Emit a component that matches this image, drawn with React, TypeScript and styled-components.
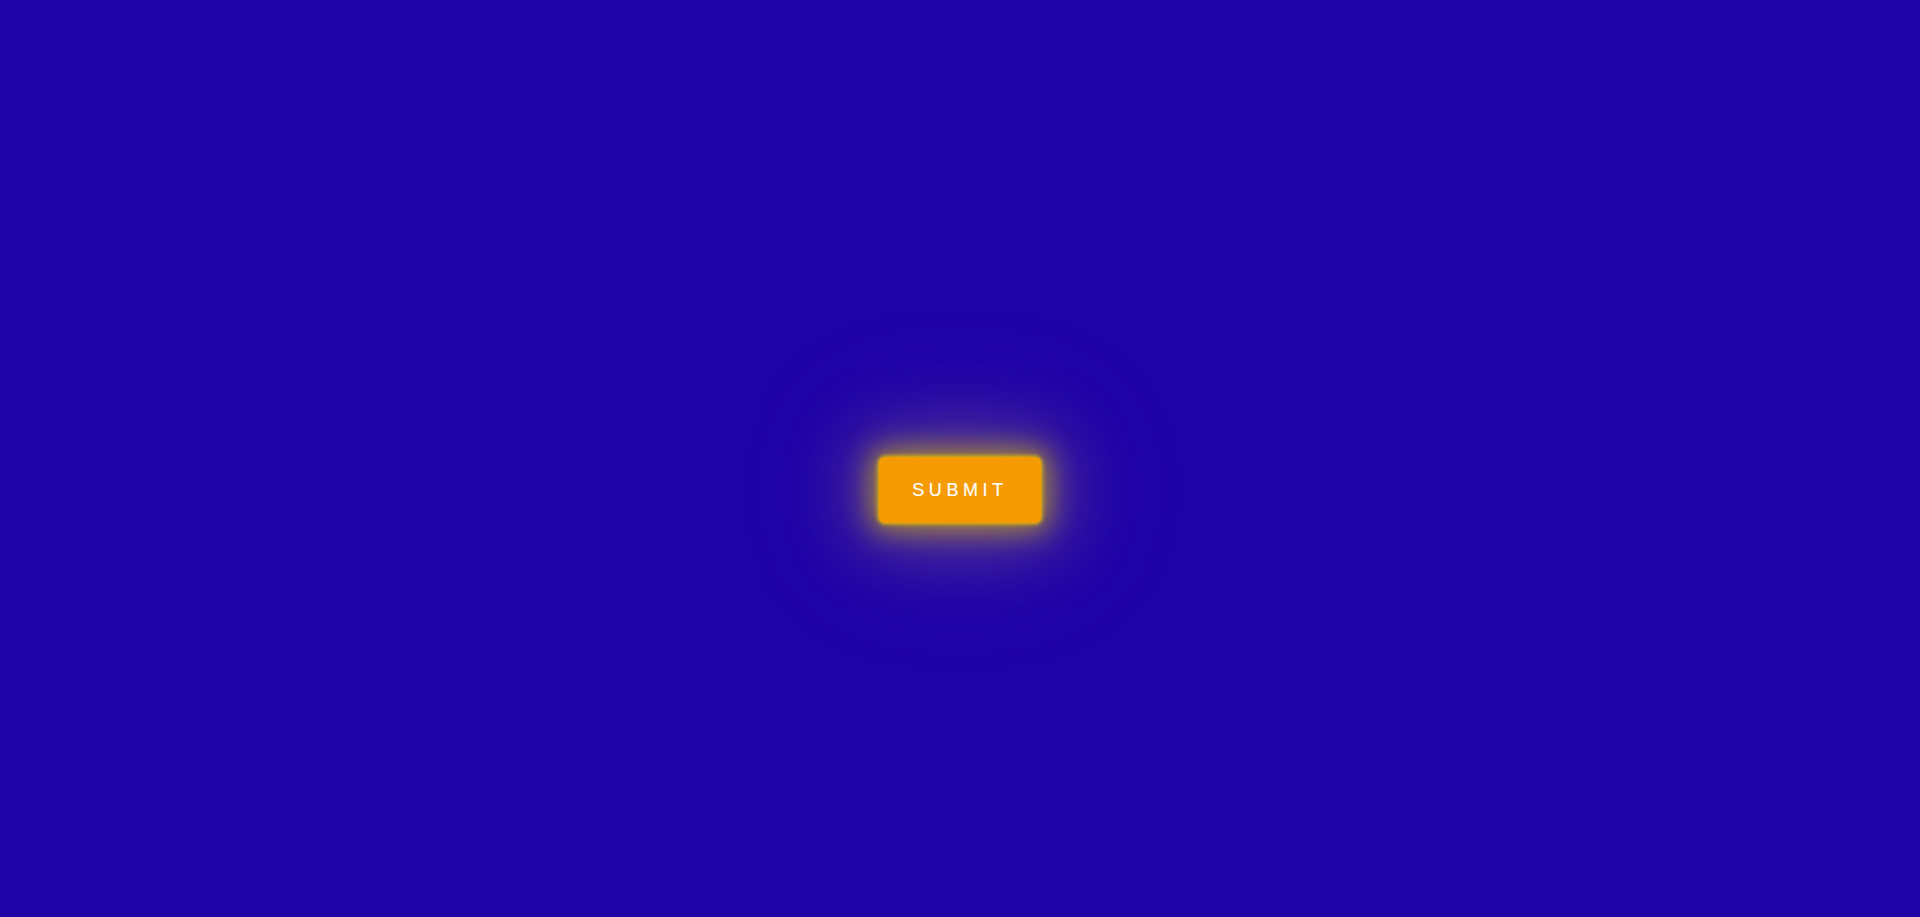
import React from "react";
import styled, { createGlobalStyle } from "styled-components";

const GlobalStyle = createGlobalStyle`
  html, body {
    margin: 0;
    padding: 0;
    background: #1e03a8;
  }
  * { box-sizing: border-box; }
`;

const Page = styled.main`
  min-height: 100vh;
  padding-top: 63px;
  display: flex;
  align-items: center;
  justify-content: center;
  background: #1e03a8;
`;

const SubmitButton = styled.button`
  width: 162px;
  height: 66px;
  border: none;
  border-radius: 6px;
  background: #f59a00;
  color: #ffffff;
  font-family: "Liberation Sans", Arial, sans-serif;
  font-size: 18px;
  font-weight: 400;
  letter-spacing: 4.6px;
  padding: 0;
  cursor: pointer;
  -webkit-text-stroke: 0.15px #ffffff;
  box-shadow:
    0 0 4px 1px #e8c400,
    0 0 28px 8px rgba(225, 195, 0, 0.6),
    0 0 72px 18px rgba(190, 160, 90, 0.36),
    0 0 130px 24px rgba(150, 120, 160, 0.2);
`;

export default function App() {
  return (
    <>
      <GlobalStyle />
      <Page>
        <SubmitButton type="button">SUBMIT</SubmitButton>
      </Page>
    </>
  );
}
